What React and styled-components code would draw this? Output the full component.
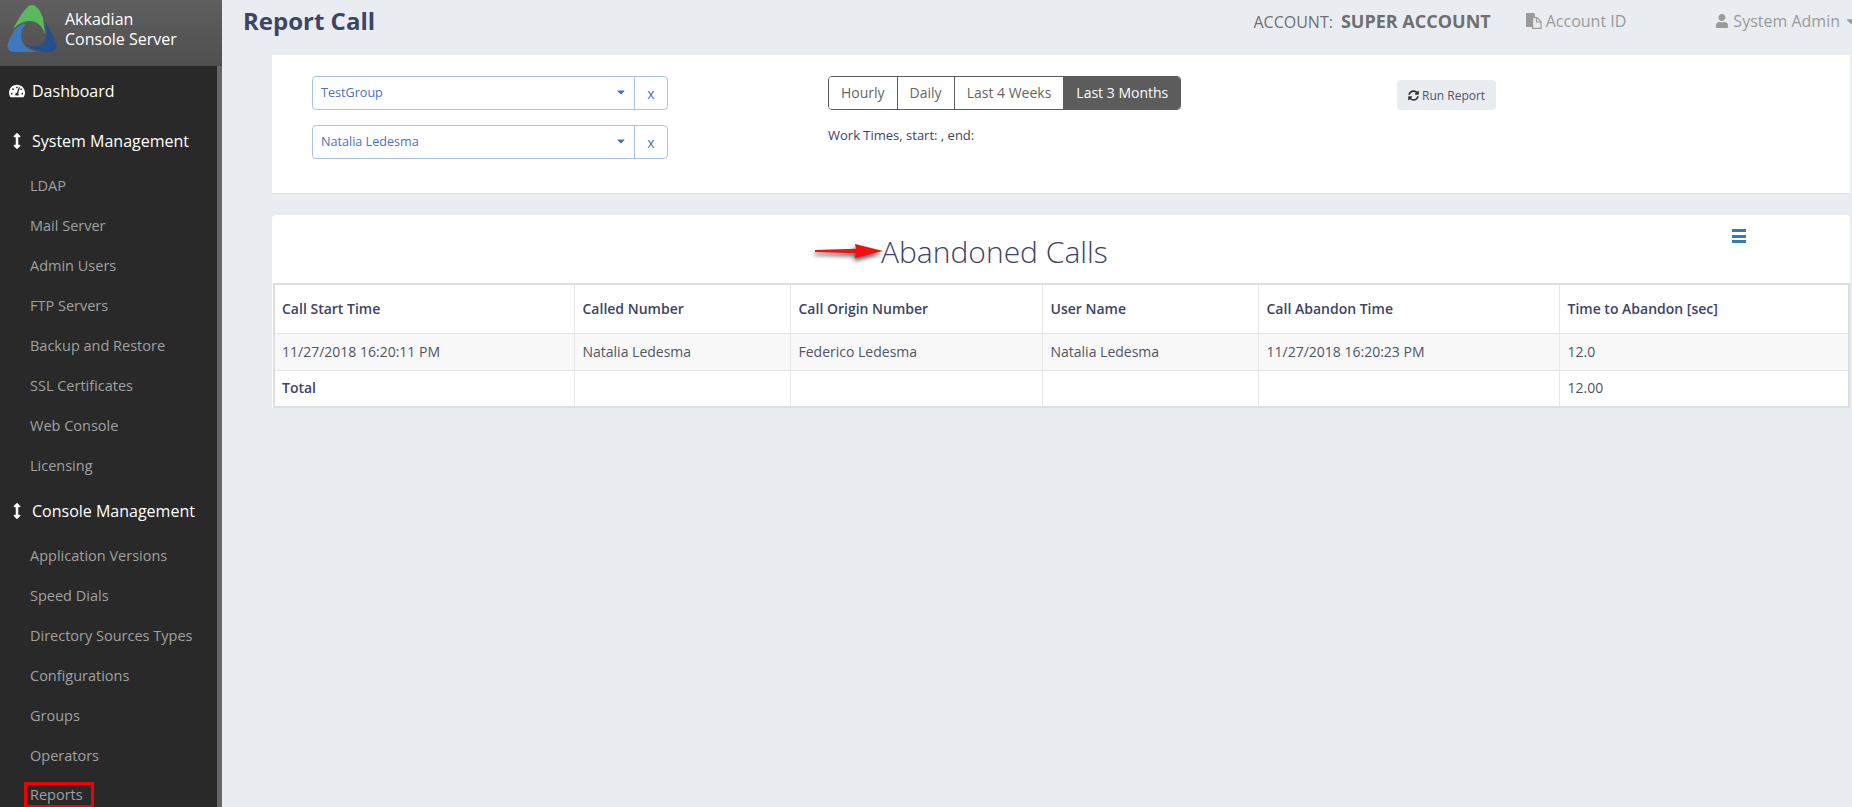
import React from 'react';
import styled, { createGlobalStyle } from 'styled-components';
import { FaTachometerAlt, FaArrowsAltV, FaSyncAlt, FaUser, FaCaretDown } from 'react-icons/fa';

const systemItems = ['LDAP', 'Mail Server', 'Admin Users', 'FTP Servers', 'Backup and Restore', 'SSL Certificates', 'Web Console', 'Licensing'];
const consoleItems = ['Application Versions', 'Speed Dials', 'Directory Sources Types', 'Configurations', 'Groups', 'Operators', 'Reports'];
const ranges = ['Hourly', 'Daily', 'Last 4 Weeks', 'Last 3 Months'];
const columns = [
  { label: 'Call Start Time', width: 300 },
  { label: 'Called Number', width: 216 },
  { label: 'Call Origin Number', width: 252 },
  { label: 'User Name', width: 216 },
  { label: 'Call Abandon Time', width: 301 },
  { label: 'Time to Abandon [sec]', width: 290 },
];
const dataRow = ['11/27/2018 16:20:11 PM', 'Natalia Ledesma', 'Federico Ledesma', 'Natalia Ledesma', '11/27/2018 16:20:23 PM', '12.0'];
const totalRow = ['Total', '', '', '', '', '12.00'];

const GlobalStyle = createGlobalStyle`
  html, body {
    margin: 0;
    height: 100%;
    overflow: hidden;
    background: #e9edf2;
    font-family: 'Open Sans', sans-serif;
  }
  * { box-sizing: border-box; }
`;

const Page = styled.div`
  display: flex;
  width: 1852px;
  height: 807px;
  overflow: hidden;
  background: #e9edf2;
`;

const Sidebar = styled.aside`
  flex: 0 0 222px;
  display: flex;
  flex-direction: column;
  height: 807px;
  overflow: hidden;
`;

const Brand = styled.div`
  flex: 0 0 66px;
  display: flex;
  align-items: center;
  gap: 8px;
  padding: 0 0 8px 7px;
  background: linear-gradient(#5f5f5f, #4f4f4f);
`;

const BrandName = styled.div`
  color: #fff;
  font-size: 16px;
  line-height: 20px;
`;

const Nav = styled.nav`
  flex: 1;
  background: #292929;
  border-right: 5px solid #666;
`;

const NavHead = styled.div`
  display: flex;
  align-items: center;
  gap: 7px;
  height: 50px;
  padding-left: 9px;
  color: #fff;
  font-size: 16px;
  svg { width: 16px; font-size: 16px; }
`;

const NavItem = styled.div`
  display: flex;
  align-items: center;
  height: 40px;
  padding: 0 0 2px 30px;
  color: #a0a0a0;
  font-size: 14.5px;
`;

const Marked = styled.span`
  margin-left: -6px;
  padding: 0 8px 0 3px;
  border: 3px solid #f00000;
  line-height: 20px;
`;

const Main = styled.main`
  flex: 1;
  min-width: 0;
`;

const TopBar = styled.header`
  display: flex;
  align-items: center;
  height: 55px;
  padding: 0 0 14px 21px;
`;

const Title = styled.h1`
  margin: 0 auto 0 0;
  color: #3d4465;
  font-size: 24px;
  font-weight: 700;
`;

const Account = styled.div`
  color: #6f6f6f;
  font-size: 16px;
  margin-right: 34px;
  b { margin-left: 8px; font-size: 18px; font-weight: 700; }
`;

const HeaderLink = styled.div`
  display: flex;
  align-items: center;
  gap: 4px;
  color: #9a9a9a;
  font-size: 16px;
  margin-right: ${(p) => p.$gap}px;
  svg { font-size: 14px; }
`;

const Content = styled.div`
  padding: 0 2px 0 50px;
`;

const Panel = styled.section`
  position: relative;
  background: #fff;
  border-bottom: 1px solid #dfe3e8;
`;

const FilterPanel = styled(Panel)`
  display: flex;
  height: 139px;
  padding: 21px 0 0 40px;
`;

const Selectors = styled.div`
  display: flex;
  flex-direction: column;
  gap: 15px;
  width: 356px;
`;

const SelectRow = styled.div`
  display: flex;
  width: 356px;
  height: 34px;
  border: 1px solid #a9c3e3;
  border-radius: 4px;
  color: #4a74bd;
  font-size: 12.6px;
`;

const SelectValue = styled.div`
  flex: 1;
  display: flex;
  align-items: center;
  justify-content: space-between;
  padding: 0 7px 2px 8px;
  svg { font-size: 12px; color: #3f74b8; }
`;

const ClearButton = styled.div`
  flex: 0 0 33px;
  display: flex;
  align-items: center;
  justify-content: center;
  border-left: 1px solid #a9c3e3;
  font-size: 14px;
`;

const Period = styled.div`
  margin-left: 160px;
  width: 569px;
`;

const ButtonGroup = styled.div`
  display: inline-flex;
  height: 34px;
  border: 1px solid #5c5c5c;
  border-radius: 4px;
  overflow: hidden;
`;

const RangeButton = styled.div`
  display: flex;
  align-items: center;
  padding: 0 12px 2px;
  font-size: 14px;
  color: ${(p) => (p.$active ? '#fff' : '#666')};
  background: ${(p) => (p.$active ? '#5c5c5c' : '#fff')};
  & + & { border-left: 1px solid #5c5c5c; }
`;

const WorkTimes = styled.div`
  margin-top: 16px;
  color: #3d4465;
  font-size: 13px;
`;

const RunButton = styled.div`
  display: flex;
  align-items: center;
  align-self: flex-start;
  gap: 3px;
  height: 30px;
  margin-top: 4px;
  padding: 0 11px;
  border-radius: 3px;
  background: #e9edf2;
  color: #4f5566;
  font-size: 12px;
  svg { font-size: 11px; color: #333; }
`;

const ReportPanel = styled(Panel)`
  margin-top: 21px;
  height: 193px;
  padding: 0 2px 0 1px;
  border-bottom: 0;
  border-radius: 4px 4px 0 0;
`;

const ChartHead = styled.div`
  position: relative;
  display: flex;
  align-items: center;
  height: 68px;
  padding: 5px 0 0 608px;
`;

const ReportTitle = styled.h2`
  margin: 0;
  color: #3d4465;
  font-size: 30px;
  font-weight: 300;
`;

const Arrow = styled.svg`
  position: absolute;
  left: 541px;
  top: 28px;
  filter: drop-shadow(-1px 3px 2px rgba(0, 0, 0, 0.65));
  overflow: visible;
`;

const MenuIcon = styled.div`
  position: absolute;
  left: 1459px;
  top: 14px;
  width: 14px;
  height: 14px;
  border-top: 3px solid #337ab7;
  border-bottom: 3px solid #337ab7;
  &::after {
    content: '';
    display: block;
    margin-top: 2.5px;
    height: 3px;
    background: #337ab7;
  }
`;

const Table = styled.table`
  width: 1575px;
  table-layout: fixed;
  border-collapse: collapse;
  border: 2px solid #dedede;
  font-size: 14px;
  color: #4f5566;
  th, td {
    padding: 0 8px;
    border: 1px solid #e7e7e7;
    text-align: left;
    overflow: hidden;
    white-space: nowrap;
  }
  th:first-child, td:first-child { padding-left: 7px; }
  th { height: 49px; color: #3d4465; font-weight: 600; }
  td { height: 37px; padding-bottom: 1px; }
  tbody tr:nth-child(odd) td { background: #f8f8f8; }
`;

const TotalCell = styled.td`
  font-weight: ${(p) => (p.$bold ? 600 : 400)};
  color: ${(p) => (p.$bold ? '#3d4465' : 'inherit')};
`;

const Logo = () => (
  <svg width="50" height="48" viewBox="7 4 50 48">
    <path d="M20 24 C14 28 11 35 8 42 C6 47 9 51 14 51 L40 51 C31 50 24 46 22 40 C20 34 21 29 26 22 Z" fill="#3f78c0" />
    <path d="M44 19 C48 25 53 34 56 42 C58 47 55 50 51 51 C44 52 36 50 26 44 C33 46 40 46 44 41 C48 36 47 26 44 19 Z" fill="#25508e" />
    <path d="M32 4 C37 4 41 11 43 17 L45 33 C42 25 37 20 30 20 C24 20 18 23 13 28 C16 22 20 15 24 10 C27 6 29 4 32 4 Z" fill="#5cb85c" />
  </svg>
);

const FilesIcon = () => (
  <svg width="17" height="16" viewBox="0 0 17 16">
    <path d="M1 0 H9 L10 1 V4 H7 V14 H1 Z" fill="#9a9a9a" />
    <path d="M7.6 4.6 H12 L16 8.5 V15.4 H7.6 Z" fill="none" stroke="#9a9a9a" strokeWidth="1.2" />
    <path d="M11.5 4.6 V9 H16" fill="none" stroke="#9a9a9a" strokeWidth="1.2" />
  </svg>
);

const RedArrow = () => (
  <Arrow width="70" height="16" viewBox="0 0 70 16">
    <path d="M1 7 L42 5.8 L41 1 L69 8 L41 15 L42 10.2 L1 9 Z" fill="#f01010" />
  </Arrow>
);

const App = () => (
  <Page>
    <GlobalStyle />
    <Sidebar>
      <Brand>
        <Logo />
        <BrandName>Akkadian<br />Console Server</BrandName>
      </Brand>
      <Nav>
        <NavHead><FaTachometerAlt />Dashboard</NavHead>
        <NavHead><FaArrowsAltV />System Management</NavHead>
        {systemItems.map((item) => <NavItem key={item}>{item}</NavItem>)}
        <NavHead><FaArrowsAltV />Console Management</NavHead>
        {consoleItems.map((item) => (
          <NavItem key={item}>{item === 'Reports' ? <Marked>{item}</Marked> : item}</NavItem>
        ))}
      </Nav>
    </Sidebar>
    <Main>
      <TopBar>
        <Title>Report Call</Title>
        <Account>ACCOUNT:<b>SUPER ACCOUNT</b></Account>
        <HeaderLink $gap={89}><FilesIcon />Account ID</HeaderLink>
        <HeaderLink $gap={-6}><FaUser />System Admin<FaCaretDown /></HeaderLink>
      </TopBar>
      <Content>
        <FilterPanel>
          <Selectors>
            {['TestGroup', 'Natalia Ledesma'].map((name) => (
              <SelectRow key={name}>
                <SelectValue>{name}<FaCaretDown /></SelectValue>
                <ClearButton>x</ClearButton>
              </SelectRow>
            ))}
          </Selectors>
          <Period>
            <ButtonGroup>
              {ranges.map((range) => (
                <RangeButton key={range} $active={range === 'Last 3 Months'}>{range}</RangeButton>
              ))}
            </ButtonGroup>
            <WorkTimes>Work Times, start: , end:</WorkTimes>
          </Period>
          <RunButton><FaSyncAlt />Run Report</RunButton>
        </FilterPanel>
        <ReportPanel>
          <ChartHead>
            <RedArrow />
            <ReportTitle>Abandoned Calls</ReportTitle>
            <MenuIcon />
          </ChartHead>
          <Table>
            <colgroup>
              {columns.map((col) => <col key={col.label} width={col.width} />)}
            </colgroup>
            <thead>
              <tr>{columns.map((col) => <th key={col.label}>{col.label}</th>)}</tr>
            </thead>
            <tbody>
              <tr>{dataRow.map((cell, i) => <td key={i}>{cell}</td>)}</tr>
              <tr>{totalRow.map((cell, i) => <TotalCell key={i} $bold={i === 0}>{cell}</TotalCell>)}</tr>
            </tbody>
          </Table>
        </ReportPanel>
      </Content>
    </Main>
  </Page>
);

export default App;
